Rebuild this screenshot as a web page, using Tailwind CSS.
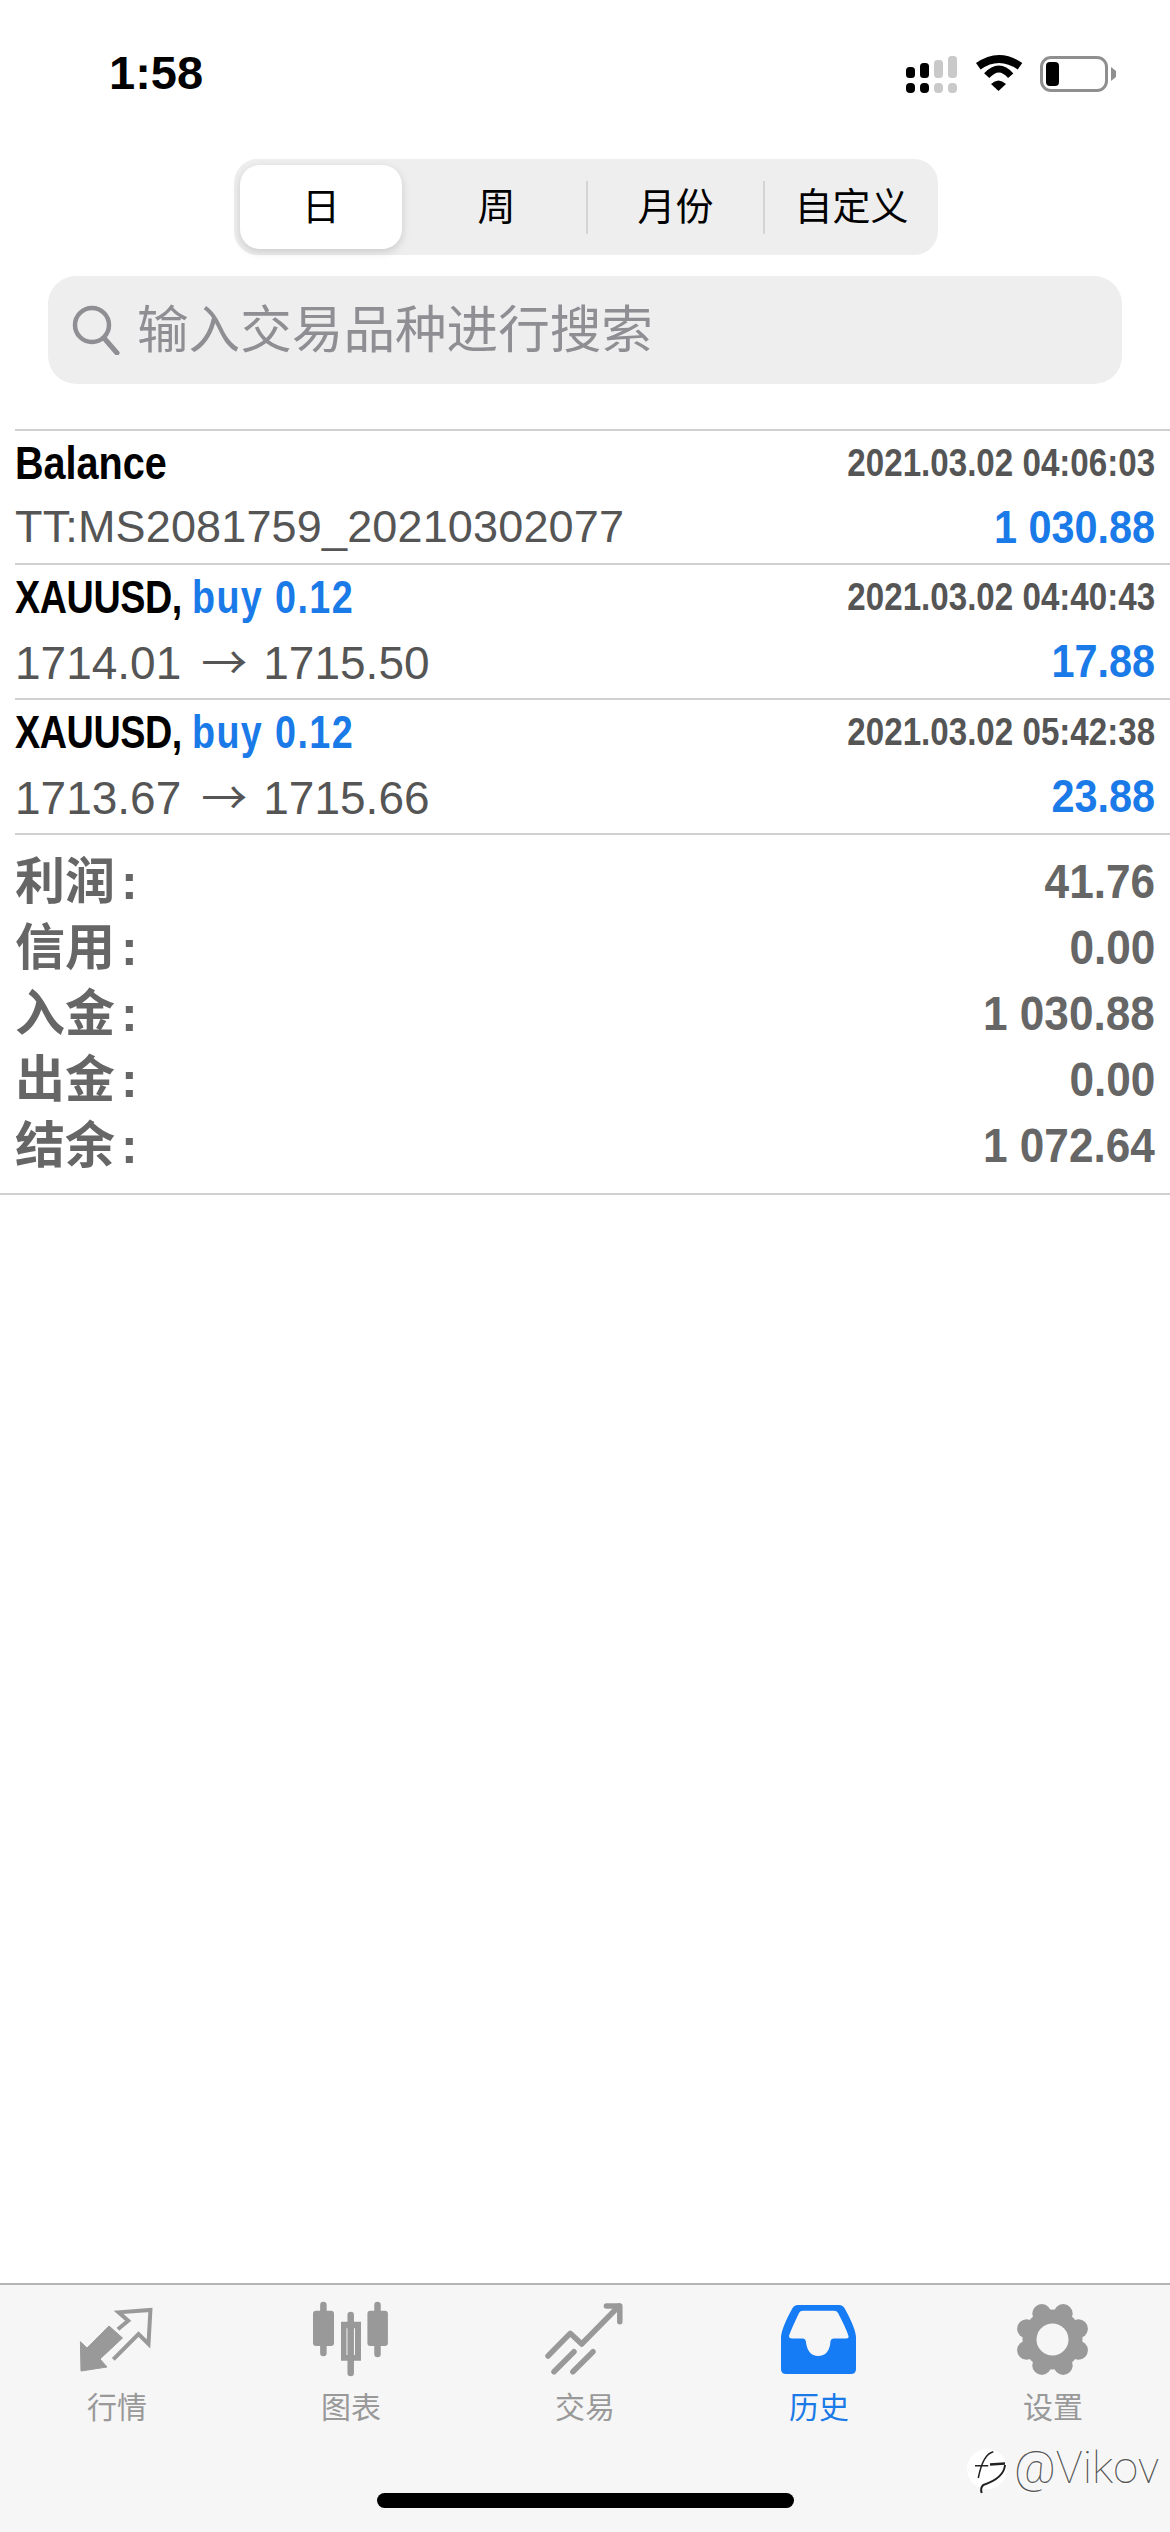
<!DOCTYPE html>
<html lang="zh">
<head>
    <meta charset="UTF-8">
    <title>历史</title>
    <script src="https://cdn.jsdelivr.net/npm/@tailwindcss/browser@4"></script>
</head>
<body class="bg-white font-['Liberation_Sans','Noto_Sans_CJK_SC',sans-serif]">
<div class="relative w-[1170px] h-[2532px] flex flex-col overflow-hidden bg-white">

    <!-- status bar -->
    <div class="h-[159px] shrink-0 flex items-start justify-between pl-[109px] pt-[48px]">
        <span class="text-[47px] leading-[50px] font-bold text-black">1:58</span>
        <div class="flex items-start mr-[53px] mt-[7px]">
            <svg width="60" height="44" viewBox="0 0 60 44" class="mr-[11px] mt-[1px]">
                <rect x="5" y="11" width="9" height="11" rx="3.5" fill="#000"/>
                <rect x="19" y="7" width="9" height="15" rx="3.5" fill="#000"/>
                <rect x="33" y="4" width="9" height="18" rx="3.5" fill="#c9c9c9"/>
                <rect x="47" y="0" width="9" height="22" rx="3.5" fill="#c9c9c9"/>
                <rect x="5" y="27" width="9" height="10" rx="4" fill="#000"/>
                <rect x="19" y="27" width="9" height="10" rx="4" fill="#000"/>
                <rect x="33" y="27" width="9" height="10" rx="4" fill="#c9c9c9"/>
                <rect x="47" y="27" width="9" height="10" rx="4" fill="#c9c9c9"/>
            </svg>
            <svg width="54" height="42" viewBox="0 0 54 42" class="mt-[-4px]">
                <path d="M6.3 15.3Q27 0.7 48 15.3" fill="none" stroke="#000" stroke-width="8"/>
                <path d="M14.7 24.7Q27 11.3 38.7 24.7" fill="none" stroke="#000" stroke-width="7"/>
                <path d="M19 33Q26.5 26 34 33L26.5 40Z" fill="#000"/>
            </svg>
            <div class="ml-[14px] w-[68px] h-[36px] rounded-[11px] border-[3px] border-[#8f8f8f] p-[3px] mt-[1px]">
                <div class="w-[13px] h-full rounded-[4px] bg-black"></div>
            </div>
            <svg width="6" height="14" viewBox="0 0 6 14" class="ml-[3px] mt-[12px]"><path d="M0 0L5 4V10L0 14Z" fill="#8f8f8f"/></svg>
        </div>
    </div>

    <!-- day / week / month tabs -->
    <div class="shrink-0 ml-[234px] w-[704px] h-[96px] rounded-[24px] bg-[#eeeeef] flex items-center pl-[6px] text-[38px] text-black">
        <div class="w-[162px] h-[84px] rounded-[20px] bg-white shadow-[0_3px_8px_rgba(0,0,0,0.15)] flex items-center justify-center">日</div>
        <div class="w-[186px] h-[53px] pl-[5px] flex items-center justify-center border-r-2 border-[#d4d4d6]">周</div>
        <div class="w-[177px] h-[53px] flex items-center justify-center border-r-2 border-[#d4d4d6]">月份</div>
        <div class="w-[173px] h-[53px] flex items-center justify-center">自定义</div>
    </div>

    <!-- search -->
    <div class="shrink-0 mt-[21px] ml-[48px] w-[1074px] h-[108px] rounded-[28px] bg-[#eeeeef] flex items-center pl-[24px]">
        <svg width="48" height="50" viewBox="0 0 48 50">
            <circle cx="20" cy="20" r="17" fill="none" stroke="#8e8e93" stroke-width="4.5"/>
            <path d="M32 33L45 48" fill="none" stroke="#8e8e93" stroke-width="5" stroke-linecap="round"/>
        </svg>
        <span class="ml-[17px] text-[51.6px] leading-[60px] text-[#8e8e93]">输入交易品种进行搜索</span>
    </div>

    <!-- deals -->
    <div class="shrink-0 mt-[45px] ml-[15px]">
        <div class="h-[134px] border-t-2 border-[#d0d0d0] pr-[15px]">
            <div class="h-[65px] flex items-center justify-between">
                <span class="text-[46px] font-bold text-black origin-left scale-x-[.86]">Balance</span>
                <span class="text-[39px] font-bold text-[#555] origin-right scale-x-[.85]">2021.03.02 04:06:03</span>
            </div>
            <div class="h-[62px] flex items-center justify-between">
                <span class="text-[45px] tracking-[0.15px] text-[#555]">TT:MS2081759_20210302077</span>
                <span class="text-[46px] font-bold text-[#1a7ae8] origin-right scale-x-[.9]">1 030.88</span>
            </div>
        </div>
        <div class="h-[135px] border-t-2 border-[#d0d0d0] pr-[15px]">
            <div class="h-[65px] flex items-center justify-between">
                <span class="text-[46px] font-bold text-black origin-left scale-x-[.82] tracking-[-0.5px] whitespace-pre">XAUUSD, <span class="text-[#1a7ae8] tracking-[1.7px]">buy 0.12</span></span>
                <span class="text-[39px] font-bold text-[#555] origin-right scale-x-[.85]">2021.03.02 04:40:43</span>
            </div>
            <div class="h-[62px] flex items-center justify-between">
                <span class="text-[46px] text-[#555]">1714.01<span class="ml-[20px] mr-[16px] font-['Noto_Sans_CJK_SC',sans-serif]">→</span>1715.50</span>
                <span class="text-[46px] font-bold text-[#1a7ae8] origin-right scale-x-[.9]">17.88</span>
            </div>
        </div>
        <div class="h-[135px] border-t-2 border-[#d0d0d0] pr-[15px]">
            <div class="h-[65px] flex items-center justify-between">
                <span class="text-[46px] font-bold text-black origin-left scale-x-[.82] tracking-[-0.5px] whitespace-pre">XAUUSD, <span class="text-[#1a7ae8] tracking-[1.7px]">buy 0.12</span></span>
                <span class="text-[39px] font-bold text-[#555] origin-right scale-x-[.85]">2021.03.02 05:42:38</span>
            </div>
            <div class="h-[62px] flex items-center justify-between">
                <span class="text-[46px] text-[#555]">1713.67<span class="ml-[20px] mr-[16px] font-['Noto_Sans_CJK_SC',sans-serif]">→</span>1715.66</span>
                <span class="text-[46px] font-bold text-[#1a7ae8] origin-right scale-x-[.9]">23.88</span>
            </div>
        </div>
    </div>

    <!-- totals -->
    <div class="shrink-0 h-[362px] border-b-2 border-[#d0d0d0] flex flex-col">
        <div class="ml-[15px] border-t-2 border-[#d0d0d0] pr-[15px] pt-[14px] text-[48px] font-bold text-[#666]">
            <div class="h-[66px] flex items-center justify-between"><span class="text-[50px]">利润<span class="ml-[6px]">:</span></span><span class="origin-right scale-x-[.92]">41.76</span></div>
            <div class="h-[66px] flex items-center justify-between"><span class="text-[50px]">信用<span class="ml-[6px]">:</span></span><span class="origin-right scale-x-[.92]">0.00</span></div>
            <div class="h-[66px] flex items-center justify-between"><span class="text-[50px]">入金<span class="ml-[6px]">:</span></span><span class="origin-right scale-x-[.92]">1 030.88</span></div>
            <div class="h-[66px] flex items-center justify-between"><span class="text-[50px]">出金<span class="ml-[6px]">:</span></span><span class="origin-right scale-x-[.92]">0.00</span></div>
            <div class="h-[66px] flex items-center justify-between"><span class="text-[50px]">结余<span class="ml-[6px]">:</span></span><span class="origin-right scale-x-[.92]">1 072.64</span></div>
        </div>
    </div>

    <!-- tab bar -->
    <div class="mt-auto h-[249px] shrink-0 border-t-2 border-[#b4b4b4] bg-[#f6f6f6] grid grid-cols-5 pt-[15px] text-[30px] leading-[40px] text-[#999]">
        <div class="flex flex-col items-center">
            <svg width="80" height="80" viewBox="0 0 80 80">
                <path d="M3.4 41.7L10 48L32 26L45.5 38L23 59L30 67L4 71Z" fill="#999" stroke="#999" stroke-width="1" stroke-linejoin="round"/>
                <path d="M36.3 59.3L61.5 34L71.5 44L73.4 10L41.6 12.3L51.2 20.7L40.9 29.3" fill="none" stroke="#999" stroke-width="4"/>
            </svg>
            <span class="mt-[8px]">行情</span>
        </div>
        <div class="flex flex-col items-center">
            <svg width="80" height="80" viewBox="0 0 80 80">
                <path d="M12.4 5V53M39.7 15V73M66.5 5V54" stroke="#999" stroke-width="6.5" stroke-linecap="round"/>
                <rect x="2" y="10.7" width="21" height="35.3" rx="3" fill="#999"/>
                <rect x="56.4" y="10.7" width="20.5" height="35.3" rx="3" fill="#999"/>
                <path fill-rule="evenodd" d="M30 21.7H50V60.7H30ZM35.5 28.3V55H44V28.3Z" fill="#999"/>
            </svg>
            <span class="mt-[8px]">图表</span>
        </div>
        <div class="flex flex-col items-center">
            <svg width="80" height="80" viewBox="0 0 80 80" fill="none" stroke="#999" stroke-width="5.5" stroke-linecap="round" stroke-linejoin="round">
                <path d="M3 56L25.2 33.3L36.7 44L74 6"/>
                <path d="M61.4 6H74.8V21.7"/>
                <path d="M9 71.7L29 51.7M27.9 71.7L48 51.7"/>
            </svg>
            <span class="mt-[8px]">交易</span>
        </div>
        <div class="flex flex-col items-center text-[#1a7ae8]">
            <svg width="80" height="80" viewBox="0 0 80 80">
                <path fill-rule="evenodd" fill="#157cf5" d="M19 5H60Q64 5 66 9Q77 29 77 38V69Q77 74 72 74H7Q2 74 2 69V38Q2 29 13 9Q15 5 19 5ZM24 10.7Q21 10.7 20 13Q11 32 10 36Q10 38.5 13 38.5H24Q26.4 38.5 26.8 41Q28.5 56 39 56Q50.5 56 51.5 41Q52 38.5 54.5 38.5H67Q70 38.5 69.5 36Q67 28 59 13Q58 10.7 55 10.7Z"/>
            </svg>
            <span class="mt-[8px]">历史</span>
        </div>
        <div class="flex flex-col items-center">
            <svg width="80" height="80" viewBox="0 0 80 80" fill="#999">
                <circle cx="39.5" cy="39.5" r="30"/>
                <circle cx="28.8" cy="13.6" r="9.5"/><circle cx="50.2" cy="13.6" r="9.5"/>
                <circle cx="65.4" cy="28.8" r="9.5"/><circle cx="65.4" cy="50.2" r="9.5"/>
                <circle cx="50.2" cy="65.4" r="9.5"/><circle cx="28.8" cy="65.4" r="9.5"/>
                <circle cx="13.6" cy="50.2" r="9.5"/><circle cx="13.6" cy="28.8" r="9.5"/>
                <circle cx="39.5" cy="39.5" r="16" fill="#f6f6f6"/>
            </svg>
            <span class="mt-[8px]">设置</span>
        </div>
    </div>

    <!-- home indicator -->
    <div class="absolute left-[377px] top-[2493px] w-[417px] h-[15px] rounded-full bg-black"></div>

    <!-- watermark -->
    <div class="absolute left-[966px] top-[2448px] flex items-start">
        <svg width="44" height="48" viewBox="0 0 44 48">
            <circle cx="21" cy="21" r="20" fill="#fff"/>
            <path d="M27.3 3.7Q17 6 12.3 30M9 17.7H22.3" fill="none" stroke="#222" stroke-width="1.5"/>
            <path d="M24 16.5L39 15.5" fill="none" stroke="#222" stroke-width="2.5"/>
            <path d="M39 17Q38 30 17.3 37Q14 40 15.7 45" fill="none" stroke="#222" stroke-width="2"/>
        </svg>
        <span class="ml-[4px] mt-[-5px] text-[45px] leading-[50px] font-['Roboto',sans-serif] font-thin text-[#555] [text-shadow:-1px_1px_0_#fff]">@Vikov</span>
    </div>
</div>
</body>
</html>
